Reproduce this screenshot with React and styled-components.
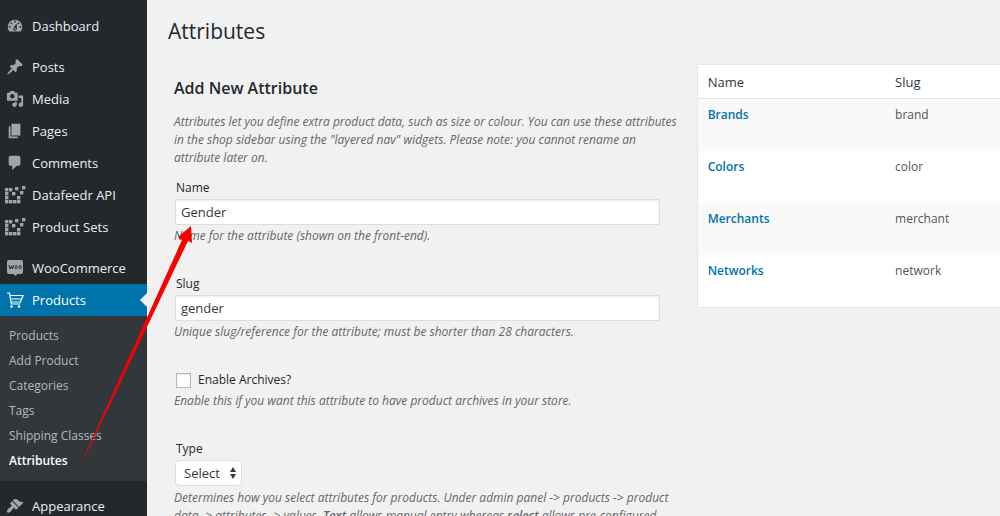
import React from 'react';
import styled, { createGlobalStyle, css } from 'styled-components';

const GlobalStyle = createGlobalStyle`
  *, *::before, *::after { box-sizing: border-box; }
  html { background: #f1f1f1; scrollbar-width: none; }
  body {
    margin: 0;
    background: #f1f1f1;
    color: #444;
    font: 12px/18px "Open Sans", sans-serif;
  }
`;

const Page = styled.div`
  display: flex;
  position: relative;
  min-height: 100vh;
`;

const Sidebar = styled.nav`
  flex: none;
  width: 147px;
  padding-top: 10px;
  background: #23282d;
`;

const Menu = styled.ul`
  list-style: none;
  margin: 0 0 9px;
  padding: 0;
`;

const MenuLink = styled.a`
  display: flex;
  align-items: center;
  gap: 8px;
  position: relative;
  height: 32px;
  padding-left: 6px;
  color: #eee;
  font-size: 13px;
  text-decoration: none;
  white-space: nowrap;

  svg {
    flex: none;
    width: 18px;
    height: 18px;
    fill: #a0a5aa;
    overflow: visible;
  }

  ${({ $current }) =>
    $current &&
    css`
      background: #0073aa;
      color: #fff;
      svg { fill: #fff; }
      &::after {
        content: '';
        position: absolute;
        right: 0;
        top: 9px;
        border: 7px solid transparent;
        border-left-width: 0;
        border-right-color: #f1f1f1;
      }
    `}
`;

const Submenu = styled.ul`
  list-style: none;
  margin: 0;
  padding: 7px 0 8px;
  background: #32373c;
`;

const SubmenuLink = styled.a`
  display: block;
  padding-left: 9px;
  color: ${({ $current }) => ($current ? '#fff' : '#b4b9be')};
  font-size: 12px;
  font-weight: ${({ $current }) => ($current ? 600 : 400)};
  line-height: 25px;
  text-decoration: none;
`;

const Main = styled.main`
  flex: 1;
  min-width: 0;
  padding: 17px 0 0 21px;
`;

const PageTitle = styled.h1`
  margin: 0;
  color: #23282d;
  font-size: 21px;
  font-weight: 400;
  line-height: 29px;
`;

const Columns = styled.div`
  display: grid;
  grid-template-columns: minmax(0, 5fr) minmax(0, 3fr);
  gap: 17px;
  align-items: start;
  padding: 18px 0 0 6px;
`;

const FormTitle = styled.h2`
  margin: 13px 0 14px;
  color: #23282d;
  font-size: 16px;
  font-weight: 600;
  line-height: 22px;
`;

const Hint = styled.p`
  margin: 0;
  color: #666;
  font-size: 12px;
  font-style: italic;
  line-height: 18px;

  strong { font-weight: 600; }
`;

const Intro = styled(Hint)`
  margin-bottom: 12px;
`;

const Field = styled.div`
  margin-bottom: 30px;
`;

const Label = styled.label`
  display: block;
  margin-bottom: 2px;
  padding-left: 2px;
  color: #23282d;
  font-size: 12px;
  line-height: 18px;
`;

const TextInput = styled.input`
  display: block;
  width: 96%;
  height: 26px;
  margin: 0 0 2px 1px;
  padding: 0 5px;
  border: 1px solid #ddd;
  border-radius: 0;
  background: #fff;
  box-shadow: inset 0 1px 2px rgba(0, 0, 0, 0.07);
  color: #32373c;
  font: 13px "Open Sans", sans-serif;
`;

const CheckLabel = styled(Label)`
  display: flex;
  align-items: center;
  gap: 7px;
  margin-bottom: 3px;
`;

const Checkbox = styled.input`
  appearance: none;
  width: 15px;
  height: 15px;
  margin: 0;
  border: 1px solid #b4b9be;
  background: #fff;
  box-shadow: inset 0 1px 2px rgba(0, 0, 0, 0.1);
`;

const SelectBox = styled.div`
  display: inline-flex;
  align-items: center;
  position: relative;
  margin: 0 0 3px 1px;
  vertical-align: top;

  svg {
    position: absolute;
    right: 6px;
    width: 6px;
    height: 12px;
    fill: #32373c;
    pointer-events: none;
  }
`;

const Select = styled.select`
  appearance: none;
  width: 67px;
  height: 26px;
  padding: 0 8px;
  border: 1px solid #ddd;
  border-radius: 4px;
  background: #fff;
  color: #32373c;
  font: 13px "Open Sans", sans-serif;
`;

const Table = styled.table`
  width: 100%;
  table-layout: fixed;
  border: 1px solid #e5e5e5;
  border-right: 0;
  border-spacing: 0;
  background: #fff;
`;

const HeadCell = styled.th`
  width: ${({ $width }) => $width};
  height: 34px;
  padding: 0 10px;
  border-bottom: 1px solid #e1e1e1;
  color: #32373c;
  font-size: 13px;
  font-weight: 400;
  text-align: left;
`;

const Row = styled.tr`
  &:nth-child(odd) { background: #f9f9f9; }
`;

const Cell = styled.td`
  height: 52px;
  padding: 7px 10px;
  color: #555;
  font-size: 12px;
  vertical-align: top;
`;

const AttributeLink = styled.a`
  color: #0073aa;
  font-weight: 600;
  text-decoration: none;
`;

const Arrow = styled.svg`
  position: absolute;
  left: 80px;
  top: 222px;
  width: 116px;
  height: 240px;
  fill: #f80000;
  pointer-events: none;
`;

const PATHS = {
  dashboard:
    'M3.76 16h12.48c1.1-1.37 1.76-3.11 1.76-5 0-4.42-3.58-8-8-8s-8 3.58-8 8c0 1.89.66 3.63 1.76 5zM10 4c.55 0 1 .45 1 1s-.45 1-1 1-1-.45-1-1 .45-1 1-1zM6 6c.55 0 1 .45 1 1s-.45 1-1 1-1-.45-1-1 .45-1 1-1zm8 0c.55 0 1 .45 1 1s-.45 1-1 1-1-.45-1-1 .45-1 1-1zm-5.37 5.55L12 7v6c0 1.1-.9 2-2 2s-2-.9-2-2c0-.57.24-1.08.63-1.45zM4 10c.55 0 1 .45 1 1s-.45 1-1 1-1-.45-1-1 .45-1 1-1zm12 0c.55 0 1 .45 1 1s-.45 1-1 1-1-.45-1-1 .45-1 1-1zm-5 3c0-.55-.45-1-1-1s-1 .45-1 1 .45 1 1 1 1-.45 1-1z',
  pin: 'M10.44 3.02l1.82-1.82 6.36 6.35-1.83 1.82c-1.05-.68-2.48-.57-3.41.36l-.75.75c-.92.93-1.04 2.35-.35 3.41l-1.83 1.82-2.41-2.41-2.8 2.79c-.42.42-3.38 2.71-3.8 2.29s1.86-3.39 2.28-3.81l2.79-2.79L4.1 9.36l1.83-1.82c1.05.69 2.48.57 3.4-.36l.75-.75c.93-.92 1.05-2.35.36-3.41z',
  media:
    'M13 11V4c0-.55-.45-1-1-1h-1.67L9 1H5L3.67 3H2c-.55 0-1 .45-1 1v7c0 .55.45 1 1 1h10c.55 0 1-.45 1-1zM7 4.5c1.38 0 2.5 1.12 2.5 2.5S8.38 9.5 7 9.5 4.5 8.38 4.5 7 5.62 4.5 7 4.5zM14 6h5v10.5c0 1.38-1.12 2.5-2.5 2.5S14 17.88 14 16.5s1.12-2.5 2.5-2.5c.17 0 .34.02.5.05V9h-3V6zm-4 8.05V13h2v3.5c0 1.38-1.12 2.5-2.5 2.5S7 17.88 7 16.5 8.12 14 9.5 14c.17 0 .34.02.5.05z',
  page: 'M6 15V2h10v13H6zm-1 1h8v2H3V5h2v11z',
  comment:
    'M5 2h9c1.1 0 2 .9 2 2v7c0 1.1-.9 2-2 2h-2l-5 5v-5H5c-1.1 0-2-.9-2-2V4c0-1.1.9-2 2-2z',
  brush:
    'M14.48 11.06L7.41 3.99l1.5-1.5c.5-.56 2.3-.47 3.51.32 1.21.8 1.43 1.28 2.91 2.1 1.18.64 2.45 1.26 4.45.85zm-.71.71L6.7 4.7 4.93 6.47c-.39.39-.39 1.02 0 1.41l1.06 1.06c.39.39.39 1.03 0 1.42-.6.6-1.43 1.11-2.21 1.69-.35.26-.7.53-1.01.84C1.43 14.23.4 16.08 1.4 17.07c.99 1 2.84-.03 4.18-1.36.31-.31.58-.66.85-1.02.57-.78 1.08-1.61 1.69-2.21.39-.39 1.02-.39 1.41 0l1.06 1.06c.39.39 1.02.39 1.41 0z',
};

const Glyph = ({ name }) => (
  <svg viewBox="0 0 20 20" aria-hidden="true">
    <path fillRule="evenodd" d={PATHS[name]} />
  </svg>
);

const PIXELS = [
  [0, 2], [4, 2], [0, 6], [0, 10], [0, 14], [4, 14], [8, 14], [12, 14], [12, 10],
  [7, 6], [10, 1], [15, 5], [17, 0],
];

const FeedIcon = () => (
  <svg viewBox="1 0 18 18" aria-hidden="true">
    {PIXELS.map(([x, y]) => (
      <rect key={`${x}-${y}`} x={x} y={y} width="3.4" height="3.4" />
    ))}
  </svg>
);

const WooIcon = () => (
  <svg viewBox="0 0 18 18" aria-hidden="true">
    <path d="M3 1h12q2 0 2 2v10q0 2-2 2h-4l-1 2-3-2H3q-2 0-2-2V3q0-2 2-2z" />
    <path
      d="M3 6l1 4 1.500-3 1 3 1-4M10 6.500a1.100 1.600 0 1 0 .1 0M14 6.500a1.100 1.600 0 1 0 .1 0"
      fill="none"
      stroke="#23282d"
    />
  </svg>
);

const CartIcon = () => (
  <svg viewBox="0 0 18 18" aria-hidden="true">
    <path
      d="M1 2h2.500l1.800 11h9.200M4 4.500h13l-2.500 6.500H5M4.500 8h10.500"
      fill="none"
      stroke="#fff"
      strokeWidth="1.200"
    />
    <circle cx="5.500" cy="15.500" r="1.200" />
    <circle cx="13" cy="15.500" r="1.200" />
  </svg>
);

const PRIMARY = [
  { label: 'Posts', icon: <Glyph name="pin" /> },
  { label: 'Media', icon: <Glyph name="media" /> },
  { label: 'Pages', icon: <Glyph name="page" /> },
  { label: 'Comments', icon: <Glyph name="comment" /> },
  { label: 'Datafeedr API', icon: <FeedIcon /> },
  { label: 'Product Sets', icon: <FeedIcon /> },
];

const SUBMENU = ['Products', 'Add Product', 'Categories', 'Tags', 'Shipping Classes', 'Attributes'];

const ATTRIBUTES = [
  { name: 'Brands', slug: 'brand' },
  { name: 'Colors', slug: 'color' },
  { name: 'Merchants', slug: 'merchant' },
  { name: 'Networks', slug: 'network' },
];

const MenuItem = ({ icon, label, current, children }) => (
  <li>
    <MenuLink href="#" $current={current}>
      {icon}
      {label}
    </MenuLink>
    {children}
  </li>
);

export default function App() {
  return (
    <Page>
      <GlobalStyle />
      <Sidebar>
        <Menu>
          <MenuItem icon={<Glyph name="dashboard" />} label="Dashboard" />
        </Menu>
        <Menu>
          {PRIMARY.map((item) => (
            <MenuItem key={item.label} {...item} />
          ))}
        </Menu>
        <Menu>
          <MenuItem icon={<WooIcon />} label="WooCommerce" />
          <MenuItem icon={<CartIcon />} label="Products" current>
            <Submenu>
              {SUBMENU.map((label) => (
                <li key={label}>
                  <SubmenuLink href="#" $current={label === 'Attributes'}>
                    {label}
                  </SubmenuLink>
                </li>
              ))}
            </Submenu>
          </MenuItem>
        </Menu>
        <Menu>
          <MenuItem icon={<Glyph name="brush" />} label="Appearance" />
        </Menu>
      </Sidebar>
      <Main>
        <PageTitle>Attributes</PageTitle>
        <Columns>
          <form>
            <FormTitle>Add New Attribute</FormTitle>
            <Intro>
              Attributes let you define extra product data, such as size or colour. You can use these
              attributes in the shop sidebar using the "layered nav" widgets. Please note: you cannot
              rename an attribute later on.
            </Intro>
            <Field>
              <Label htmlFor="name">Name</Label>
              <TextInput id="name" type="text" defaultValue="Gender" />
              <Hint>Name for the attribute (shown on the front-end).</Hint>
            </Field>
            <Field>
              <Label htmlFor="slug">Slug</Label>
              <TextInput id="slug" type="text" defaultValue="gender" />
              <Hint>Unique slug/reference for the attribute; must be shorter than 28 characters.</Hint>
            </Field>
            <Field>
              <CheckLabel>
                <Checkbox type="checkbox" />
                Enable Archives?
              </CheckLabel>
              <Hint>Enable this if you want this attribute to have product archives in your store.</Hint>
            </Field>
            <Field>
              <Label htmlFor="type">Type</Label>
              <SelectBox>
                <Select id="type" defaultValue="Select">
                  <option>Select</option>
                  <option>Text</option>
                </Select>
                <svg viewBox="0 0 6 12" aria-hidden="true">
                  <path d="M0 5l3-5 3 5zM0 7h6l-3 5z" />
                </svg>
              </SelectBox>
              <Hint>
                Determines how you select attributes for products. Under admin panel -&gt; products
                -&gt; product data -&gt; attributes -&gt; values, <strong>Text</strong> allows manual
                entry whereas <strong>select</strong> allows pre-configured
              </Hint>
            </Field>
          </form>
          <Table>
            <thead>
              <tr>
                <HeadCell $width="62%">Name</HeadCell>
                <HeadCell $width="38%">Slug</HeadCell>
              </tr>
            </thead>
            <tbody>
              {ATTRIBUTES.map(({ name, slug }) => (
                <Row key={slug}>
                  <Cell>
                    <AttributeLink href="#">{name}</AttributeLink>
                  </Cell>
                  <Cell>{slug}</Cell>
                </Row>
              ))}
            </tbody>
          </Table>
        </Columns>
      </Main>
      <Arrow viewBox="0 0 116 240" aria-hidden="true">
        <path d="M4 235L102 18l-4-3L111 4l1 17-4-2L5 235z" />
      </Arrow>
    </Page>
  );
}
